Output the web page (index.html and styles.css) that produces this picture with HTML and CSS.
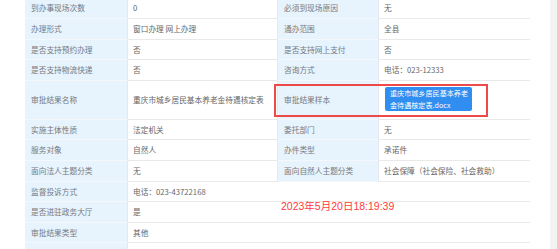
FILE: index.html
```html
<!DOCTYPE html>
<html lang="zh-CN">
<head>
<meta charset="utf-8">
<title>事项详情</title>
<link rel="stylesheet" href="styles.css">
</head>
<body>
<div class="page">
  <div class="main">
    <div class="grid grid4">
      <div class="c lab r1">到办事现场次数</div><div class="c val r1">0</div><div class="c lab r1">必须到现场原因</div><div class="c val r1 last">无</div>
      <div class="c lab r2">办理形式</div><div class="c val r2">窗口办理 网上办理</div><div class="c lab r2">通办范围</div><div class="c val r2 last">全县</div>
      <div class="c lab r3">是否支持预约办理</div><div class="c val r3">否</div><div class="c lab r3">是否支持网上支付</div><div class="c val r3 last">否</div>
      <div class="c lab r4">是否支持物流快递</div><div class="c val r4">否</div><div class="c lab r4">咨询方式</div><div class="c val r4 last">电话：023-12333</div>
      <div class="c lab r5">审批结果名称</div><div class="c val r5">重庆市城乡居民基本养老金待遇核定表</div><div class="c lab r5">审批结果样本</div><div class="c val r5 last"><span class="btn">重庆市城乡居民基本养老金待遇核定表.docx</span></div>
      <div class="c lab r6">实施主体性质</div><div class="c val r6">法定机关</div><div class="c lab r6">委托部门</div><div class="c val r6 last">无</div>
      <div class="c lab r7">服务对象</div><div class="c val r7">自然人</div><div class="c lab r7">办件类型</div><div class="c val r7 last">承诺件</div>
      <div class="c lab r8">面向法人主题分类</div><div class="c val r8">无</div><div class="c lab r8">面向自然人主题分类</div><div class="c val r8 last">社会保障（社会保险、社会救助）</div>
    </div>
    <div class="grid grid2">
      <div class="c lab s1">监督投诉方式</div><div class="c val s1 last">电话：023-43722168</div>
      <div class="c lab s2">是否进驻政务大厅</div><div class="c val s2 last">是</div>
      <div class="c lab s3">审批结果类型</div><div class="c val s3 last">其他</div>
      <div class="c lab s4"></div><div class="c val s4 last"></div>
    </div>
  </div>
  <div class="gap"></div>
  <div class="scroll"></div>
  <div class="mark"></div>
  <div class="stamp">2023年5月20日18:19:39</div>
</div>
</body>
</html>
```
FILE: styles.css
```css
html, body {
  margin: 0;
  padding: 0;
  background: #ffffff;
}
body {
  width: 557px;
  height: 249px;
  overflow: hidden;
  font-family: "Noto Sans CJK SC", "Noto Sans", sans-serif;
}
.page {
  position: relative;
  display: flex;
  width: 557px;
  height: 249px;
  overflow: hidden;
}
.main {
  margin-left: 25px;
  width: 505px;
  margin-top: -2px;
  flex: none;
}
.gap {
  width: 20px;
  flex: none;
}
.scroll {
  width: 7px;
  flex: none;
  background: #f3f3f3;
}
.grid {
  display: grid;
  border-right: 1px solid #e6e6e6;
}
.grid4 {
  grid-template-columns: 103px 150px 101px 151px;
  grid-template-rows: 21px 21px 20px 21px 39px 20px 21px 21px;
}
.grid2 {
  grid-template-columns: 103px 402px;
  grid-template-rows: 20px 21px 20px 30px;
}
.c {
  box-sizing: border-box;
  display: flex;
  align-items: center;
  padding: 0 5px;
  font-size: 7.7px;
  line-height: 10px;
  border-bottom: 1px solid #e9e9e9;
  border-right: 1px solid #e9e9e9;
  white-space: nowrap;
  overflow: hidden;
}
.c.last {
  border-right: none;
}
.lab {
  background: #e7f3fd;
  color: #767a80;
  padding-left: 6px;
  border-bottom-color: #f4f8fc;
  border-right-color: #e3e8ee;
}
.val {
  background: #ffffff;
  color: #666666;
}
.btn {
  display: block;
  box-sizing: border-box;
  width: 87px;
  height: 24px;
  padding: 0 2px 0 5px;
  background: #2f8ef0;
  color: #ffffff;
  border-radius: 2px;
  font-size: 7.1px;
  line-height: 12px;
  white-space: normal;
  word-break: break-all;
  margin-left: 1px;
  margin-top: -2px;
}
.mark {
  position: absolute;
  left: 274px;
  top: 84px;
  width: 214px;
  height: 33px;
  box-sizing: border-box;
  border: 2px solid #ef4a4a;
}
.stamp {
  position: absolute;
  left: 281px;
  top: 200px;
  font-family: "Liberation Sans", "Noto Sans CJK SC", sans-serif;
  font-size: 10.5px;
  line-height: 12px;
  color: #ff3b3b;
  white-space: nowrap;
}
```
